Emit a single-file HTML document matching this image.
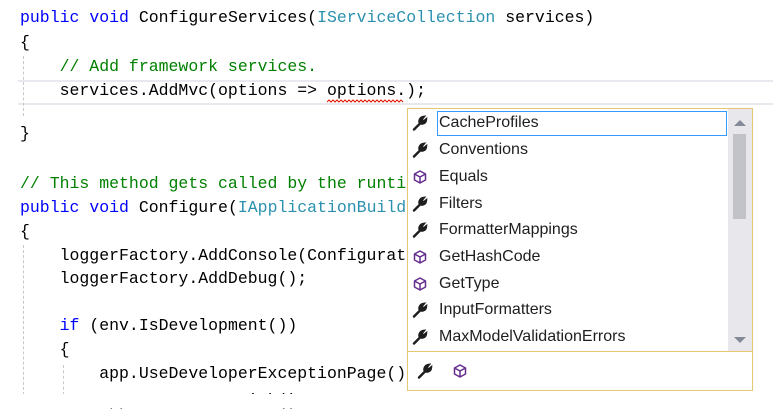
<!DOCTYPE html>
<html><head><style>
body{margin:0;width:773px;height:407px;overflow:hidden;background:#fff;position:relative;font-family:"Liberation Mono",monospace;}
.l{position:absolute;left:20px;font-size:16.5px;white-space:pre;color:#000;line-height:20px;}
.k{color:#0000ff}.t{color:#2b91af}.c{color:#008000}
.g{position:absolute;border-left:1px dashed #c8c8c8;width:0}
#pop{position:absolute;left:407px;top:108px;width:344px;height:281px;border:1px solid #e6c874;background:#fff;font-family:"Liberation Sans",sans-serif;}
.it{position:absolute;left:31px;font-size:16px;color:#1e1e1e;}
.ic{position:absolute;left:4px;width:16px;height:16px}
</style></head><body>
<div style="position:absolute;left:18px;top:80px;width:755px;height:21px;border-top:2px solid #e8e8ee;border-bottom:2px solid #e8e8ee"></div>
<div class="g" style="left:23px;top:56px;height:60px"></div>
<div class="g" style="left:23px;top:245px;height:150px"></div>
<div class="g" style="left:63px;top:365px;height:30px"></div>
<div class="l" style="top:8px"><span class="k">public</span> <span class="k">void</span> ConfigureServices(<span class="t">IServiceCollection</span> services)</div>
<div class="l" style="top:33px">{</div>
<div class="l c" style="top:57px">    // Add framework services.</div>
<div class="l" style="top:81px">    services.AddMvc(options =&gt; options.);</div>
<svg style="position:absolute;left:327px;top:99px" width="80" height="5"><path d="M0 3 l2 -2 l2 2 l2 -2 l2 2 l2 -2 l2 2 l2 -2 l2 2 l2 -2 l2 2 l2 -2 l2 2 l2 -2 l2 2 l2 -2 l2 2 l2 -2 l2 2 l2 -2 l2 2 l2 -2 l2 2 l2 -2 l2 2 l2 -2 l2 2 l2 -2 l2 2 l2 -2 l2 2 l2 -2 l2 2 l2 -2 l2 2 l2 -2 l2 2 l2 -2 l2 2" fill="none" stroke="#e51400" stroke-width="1"/></svg>
<div class="l" style="top:124px">}</div>
<div class="l c" style="top:174px">// This method gets called by the runtime.</div>
<div class="l" style="top:198px"><span class="k">public</span> <span class="k">void</span> Configure(<span class="t">IApplicationBuilder</span> app)</div>
<div class="l" style="top:222px">{</div>
<div class="l" style="top:246px">    loggerFactory.AddConsole(Configuration);</div>
<div class="l" style="top:269px">    loggerFactory.AddDebug();</div>
<div class="l" style="top:316px">    <span class="k">if</span> (env.IsDevelopment())</div>
<div class="l" style="top:340px">    {</div>
<div class="l" style="top:364px">        app.UseDeveloperExceptionPage();</div>
<div class="l" style="top:391px">        app.UseBrowserLink();</div>
<div style="position:absolute;left:0;top:394px;width:773px;height:14px;background:#fff"></div>
<div id="pop">
<div style="position:absolute;left:29px;top:2px;width:288px;height:23px;border:1px solid #3399ff"></div>
<div style="position:absolute;left:320px;top:0;width:24px;height:242px;background:#e8e8ec"></div>
<div style="position:absolute;left:325px;top:25px;width:13px;height:85px;background:#c2c3c9"></div>
<div style="position:absolute;left:326px;top:11px;border:6px solid transparent;border-bottom:6px solid #868999;border-top:0"></div>
<div style="position:absolute;left:326px;top:228px;border:6px solid transparent;border-top:6px solid #868999;border-bottom:0"></div>
<div style="position:absolute;left:0;top:242px;width:344px;height:1px;background:#e6c874"></div>
<svg width="0" height="0" style="position:absolute"><defs>
<symbol id="w" viewBox="0 0 16 16"><path d="M2 14.5 L8.5 8 M8 8.5 C6.5 6 8 2.5 11.5 2 L9.5 4.5 L11.5 6.5 L14 4.5 C13.8 8 10.5 9.5 8 8" fill="#1e1e1e" stroke="#1e1e1e" stroke-width="2.4" stroke-linecap="round"/></symbol>
<symbol id="m" viewBox="0 0 16 16"><path d="M8 2 L13.5 5 L13.5 11 L8 14 L2.5 11 L2.5 5 Z M2.5 5 L8 8 L13.5 5 M8 8 L8 14" fill="none" stroke="#652d8e" stroke-width="1.5" stroke-linejoin="round"/></symbol>
</defs></svg>
<svg class="ic" style="top:6px"><use href="#w"/></svg><div class="it" style="top:5px">CacheProfiles</div>
<svg class="ic" style="top:33px"><use href="#w"/></svg><div class="it" style="top:32px">Conventions</div>
<svg class="ic" style="top:60px"><use href="#m"/></svg><div class="it" style="top:59px">Equals</div>
<svg class="ic" style="top:87px"><use href="#w"/></svg><div class="it" style="top:86px">Filters</div>
<svg class="ic" style="top:113px"><use href="#w"/></svg><div class="it" style="top:112px">FormatterMappings</div>
<svg class="ic" style="top:140px"><use href="#m"/></svg><div class="it" style="top:139px">GetHashCode</div>
<svg class="ic" style="top:167px"><use href="#m"/></svg><div class="it" style="top:166px">GetType</div>
<svg class="ic" style="top:193px"><use href="#w"/></svg><div class="it" style="top:192px">InputFormatters</div>
<svg class="ic" style="top:220px"><use href="#w"/></svg><div class="it" style="top:219px">MaxModelValidationErrors</div>
<svg class="ic" style="top:254px;left:9px"><use href="#w"/></svg>
<svg class="ic" style="top:254px;left:44px"><use href="#m"/></svg>
</div>
</body></html>
